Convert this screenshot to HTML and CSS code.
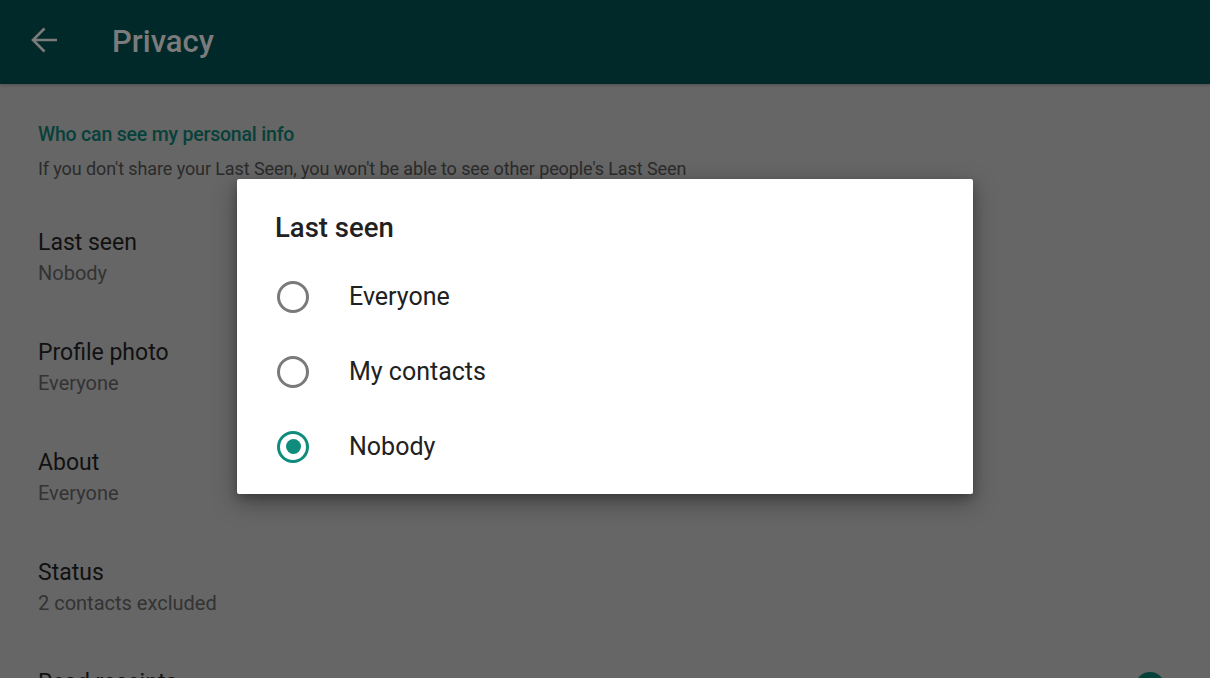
FILE: index.html
```html
<!DOCTYPE html>
<html lang="en">
<head>
    <meta charset="UTF-8">
    <meta name="viewport" content="width=device-width, initial-scale=1.0">
    <title>Privacy</title>
    <link rel="stylesheet" href="styles.css">
</head>
<body>
    <div class="app">
        <header class="toolbar">
            <svg class="back-icon" viewBox="0 0 28 28" width="28" height="28">
                <path d="M27 14H3M14.5 2.5L3 14l11.5 11.5" fill="none" stroke="currentColor" stroke-width="2.6"/>
            </svg>
            <h1 class="toolbar-title">Privacy</h1>
        </header>

        <main class="settings">
            <h2 class="group-title">Who can see my personal info</h2>
            <p class="group-hint">If you don't share your Last Seen, you won't be able to see other people's Last Seen</p>

            <div class="setting-row">
                <div class="setting-name">Last seen</div>
                <div class="setting-value">Nobody</div>
            </div>
            <div class="setting-row">
                <div class="setting-name">Profile photo</div>
                <div class="setting-value">Everyone</div>
            </div>
            <div class="setting-row">
                <div class="setting-name">About</div>
                <div class="setting-value">Everyone</div>
            </div>
            <div class="setting-row">
                <div class="setting-name">Status</div>
                <div class="setting-value">2 contacts excluded</div>
            </div>
            <div class="setting-row setting-toggle">
                <div class="setting-name">Read receipts</div>
                <span class="switch-thumb"></span>
            </div>
        </main>

        <div class="dialog">
            <h3 class="dialog-title">Last seen</h3>
            <div class="option">
                <span class="radio"></span>
                <span class="option-label">Everyone</span>
            </div>
            <div class="option">
                <span class="radio"></span>
                <span class="option-label">My contacts</span>
            </div>
            <div class="option">
                <span class="radio checked"></span>
                <span class="option-label">Nobody</span>
            </div>
        </div>
    </div>
</body>
</html>
```

FILE: styles.css
```css
* {
    margin: 0;
    padding: 0;
    box-sizing: border-box;
}

body {
    font-family: Roboto, "Noto Sans", sans-serif;
    background: #666666;
    overflow: hidden;
}

.app {
    position: relative;
    width: 1210px;
    height: 678px;
    overflow: hidden;
}

.toolbar {
    height: 84px;
    background: #02292a;
    display: flex;
    align-items: center;
    padding-left: 30px;
    color: #7b7b7b;
    box-shadow: 0 1px 3px rgba(0, 0, 0, 0.25);
}

.back-icon {
    width: 28px;
    height: 28px;
    margin-top: -4px;
}

.toolbar-title {
    font-size: 31px;
    font-weight: 500;
    margin-left: 54px;
    margin-top: -2px;
}

.settings {
    padding: 38px 38px 0;
}

.group-title {
    font-size: 19.5px;
    font-weight: 500;
    color: #08403a;
    line-height: 26px;
    letter-spacing: -0.2px;
}

.group-hint {
    font-size: 18px;
    color: #2b2b2b;
    margin-top: 9px;
    line-height: 24px;
    letter-spacing: -0.1px;
}

.setting-row {
    height: 110px;
    padding-top: 47px;
}

.setting-name {
    font-size: 23px;
    color: #111111;
    line-height: 30px;
}

.setting-value {
    font-size: 20px;
    color: #333333;
    line-height: 30px;
}

.setting-toggle {
    display: flex;
    justify-content: space-between;
}

.switch-thumb {
    width: 30px;
    height: 30px;
    border-radius: 50%;
    background: #08403a;
    margin-top: 4px;
    margin-right: 7px;
}

.dialog {
    position: absolute;
    left: 237px;
    top: 179px;
    width: 736px;
    height: 315px;
    background: #ffffff;
    border-radius: 2px;
    box-shadow: 0 8px 24px rgba(0, 0, 0, 0.35), 0 4px 8px rgba(0, 0, 0, 0.2);
    padding: 32px 38px 0;
}

.dialog-title {
    font-size: 27.5px;
    font-weight: 500;
    color: #212121;
    line-height: 34px;
    margin-bottom: 14px;
}

.option {
    display: flex;
    align-items: center;
    height: 75px;
}

.radio {
    width: 32px;
    height: 32px;
    margin-left: 2px;
    border: 3px solid #7a7a7a;
    border-radius: 50%;
    display: flex;
    align-items: center;
    justify-content: center;
}

.radio.checked {
    border-color: #0f8c7c;
}

.radio.checked::after {
    content: "";
    width: 15px;
    height: 15px;
    border-radius: 50%;
    background: #0f8c7c;
}

.option-label {
    font-size: 25px;
    color: #212121;
    margin-left: 40px;
}
```
